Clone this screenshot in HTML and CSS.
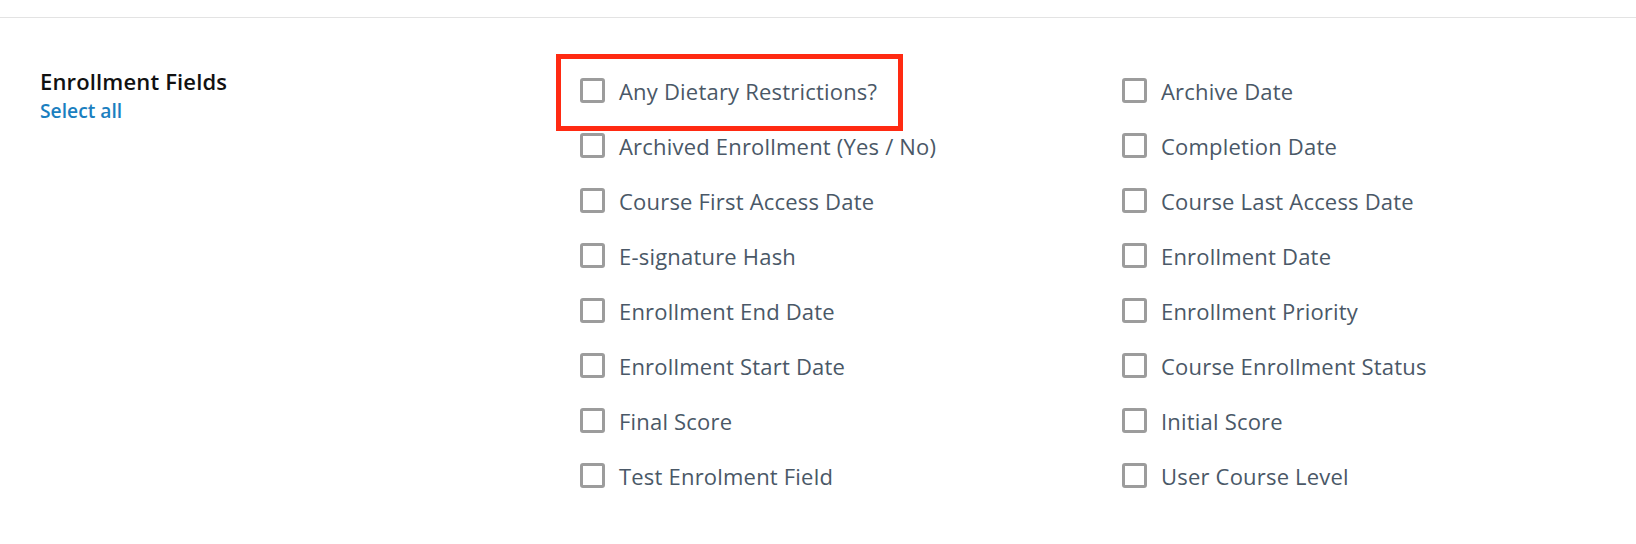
FILE: index.html
```html
<!DOCTYPE html>
<html>
<head>
<meta charset="utf-8">
<title>Enrollment Fields</title>
<link rel="stylesheet" href="styles.css">
</head>
<body>
<div class="topbar"></div>

<section class="fields">
  <div class="fields-label">
    <h2>Enrollment Fields</h2>
    <a href="#" class="select-all">Select all</a>
  </div>

  <div class="field-grid">
    <label class="field highlighted"><span class="box"></span>Any Dietary Restrictions?<span class="mark"></span></label>
    <label class="field"><span class="box"></span>Archive Date</label>
    <label class="field"><span class="box"></span>Archived Enrollment (Yes / No)</label>
    <label class="field"><span class="box"></span>Completion Date</label>
    <label class="field"><span class="box"></span>Course First Access Date</label>
    <label class="field"><span class="box"></span>Course Last Access Date</label>
    <label class="field"><span class="box"></span>E-signature Hash</label>
    <label class="field"><span class="box"></span>Enrollment Date</label>
    <label class="field"><span class="box"></span>Enrollment End Date</label>
    <label class="field"><span class="box"></span>Enrollment Priority</label>
    <label class="field"><span class="box"></span>Enrollment Start Date</label>
    <label class="field"><span class="box"></span>Course Enrollment Status</label>
    <label class="field"><span class="box"></span>Final Score</label>
    <label class="field"><span class="box"></span>Initial Score</label>
    <label class="field"><span class="box"></span>Test Enrolment Field</label>
    <label class="field"><span class="box"></span>User Course Level</label>
  </div>
</section>
</body>
</html>
```

FILE: styles.css
```css
body {
   margin: 0;
   background-color: white;
   font-family: 'Open Sans', 'Liberation Sans', sans-serif;
}

.topbar {
   height: 17px;
   border-bottom: 1px solid #e3e3e3;
}

.fields {
   display: flex;
   padding: 50px 0 0 40px;
}

.fields-label {
   width: 540px;
   flex-shrink: 0;
}

.fields-label h2 {
   margin: 0;
   font-size: 22px;
   line-height: 26px;
   font-weight: 600;
   letter-spacing: 0.15px;
   color: #111;
}

.select-all {
   display: block;
   margin-top: 4px;
   font-size: 19.25px;
   line-height: 26px;
   font-weight: 600;
   color: #1b7fc0;
   text-decoration: none;
}

.field-grid {
   display: grid;
   grid-template-columns: 542px 542px;
   grid-auto-rows: 55px;
   margin-top: 10px;
}

.field {
   position: relative;
   display: flex;
   align-items: flex-start;
   font-size: 22px;
   line-height: 26px;
   letter-spacing: 0.2px;
   color: #4a5867;
   white-space: nowrap;
}

.box {
   box-sizing: border-box;
   width: 25px;
   height: 25px;
   margin-right: 14px;
   border: 3px solid #9c9c9c;
   border-radius: 3px;
   flex-shrink: 0;
}

.mark {
   position: absolute;
   left: -24px;
   top: -24px;
   width: 347px;
   height: 77px;
   box-sizing: border-box;
   border: 5px solid #ff2a12;
}
```
